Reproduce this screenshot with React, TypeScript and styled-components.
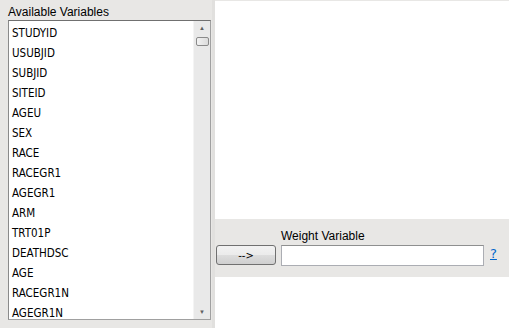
import styled, { createGlobalStyle } from 'styled-components';

const variables = [
    'STUDYID',
    'USUBJID',
    'SUBJID',
    'SITEID',
    'AGEU',
    'SEX',
    'RACE',
    'RACEGR1',
    'AGEGR1',
    'ARM',
    'TRT01P',
    'DEATHDSC',
    'AGE',
    'RACEGR1N',
    'AGEGR1N',
];

export default function App() {
    return (
        <>
            <GlobalStyle />
            <SWindow>
                <SLeft>
                    <SLabel>Available Variables</SLabel>
                    <SListBox>
                        <SList>
                            {variables.map((v) => (
                                <SItem key={v}>{v}</SItem>
                            ))}
                        </SList>
                        <SScrollbar>
                            <SArrow>▲</SArrow>
                            <SThumb />
                            <STrack />
                            <SArrow>▼</SArrow>
                        </SScrollbar>
                    </SListBox>
                </SLeft>
                <SRight>
                    <SWhitePanel $grow={false} />
                    <SControls>
                        <SButton>--&gt;</SButton>
                        <SField>
                            <SFieldLabel>Weight Variable</SFieldLabel>
                            <SInput />
                        </SField>
                        <SHelp href="#">?</SHelp>
                    </SControls>
                    <SWhitePanel $grow />
                </SRight>
            </SWindow>
        </>
    );
}

const GlobalStyle = createGlobalStyle`
    html, body {
        margin: 0;
        padding: 0;
        background: #e8e7e5;
    }
    body {
        font-family: "Liberation Sans", Arial, sans-serif;
        font-size: 12px;
        color: #000;
    }
`;

const SWindow = styled.div`
    width: 509px;
    height: 328px;
    display: flex;
    background: #e8e7e5;
    overflow: hidden;
`;

const SLeft = styled.div`
    width: 215px;
    padding: 4px 0 0 8px;
    box-sizing: border-box;
    display: flex;
    flex-direction: column;
    border-right: 3px solid #e1e0de;
`;

const SLabel = styled.div`
    font-size: 12px;
    height: 16px;
    line-height: 16px;
`;

const SListBox = styled.div`
    display: flex;
    width: 203px;
    height: 300px;
    box-sizing: border-box;
    background: #fff;
    border: 1px solid #a0a0a0;
    border-top-color: #707070;
    border-left-color: #8a8a8a;
`;

const SList = styled.ul`
    flex: 1;
    list-style: none;
    margin: 0;
    padding: 2px 0 0 3px;
    overflow: hidden;
`;

const SItem = styled.li`
    height: 20px;
    line-height: 20px;
    font-family: "DejaVu Sans Condensed", "DejaVu Sans", sans-serif;
    font-size: 11.5px;
    color: #000;
`;

const SScrollbar = styled.div`
    width: 16px;
    display: flex;
    flex-direction: column;
    align-items: center;
    background: #e9e9e9;
    border-left: 1px solid #f4f4f4;
`;

const SArrow = styled.div`
    height: 14px;
    line-height: 14px;
    font-size: 6px;
    color: #606060;
`;

const SThumb = styled.div`
    width: 13px;
    height: 9px;
    margin-top: 2px;
    box-sizing: border-box;
    border: 1px solid #8a8a8a;
    border-radius: 2px;
    background: linear-gradient(to right, #f2f2f2, #dcdcdc);
`;

const STrack = styled.div`
    flex: 1;
`;

const SRight = styled.div`
    flex: 1;
    display: flex;
    flex-direction: column;
    padding-top: 1px;
`;

const SWhitePanel = styled.div<{ $grow: boolean }>`
    background: #fff;
    height: ${(p) => (p.$grow ? 'auto' : '218px')};
    flex: ${(p) => (p.$grow ? '1' : 'none')};
`;

const SControls = styled.div`
    height: 58px;
    box-sizing: border-box;
    display: flex;
    align-items: flex-end;
    padding: 0 0 11px 1px;
`;

const SButton = styled.button`
    width: 60px;
    height: 20px;
    margin: 0 5px 1px 0;
    padding: 0;
    font-family: "DejaVu Sans", sans-serif;
    font-size: 10px;
    border: 1px solid #707070;
    border-radius: 3px;
    background: linear-gradient(to bottom, #f2f2f2 0%, #ebebeb 50%, #dddddd 51%, #cfcfcf 100%);
    color: #000;
`;

const SField = styled.div`
    display: flex;
    flex-direction: column;
`;

const SFieldLabel = styled.div`
    font-size: 12px;
    height: 16px;
    line-height: 14px;
`;

const SInput = styled.div`
    width: 203px;
    height: 21px;
    box-sizing: border-box;
    background: #fff;
    border: 1px solid #abadb3;
    border-top-color: #8e8f8f;
`;

const SHelp = styled.a`
    margin: 0 0 5px 6px;
    font-family: "DejaVu Sans", sans-serif;
    font-size: 13px;
    color: #0066cc;
`;
